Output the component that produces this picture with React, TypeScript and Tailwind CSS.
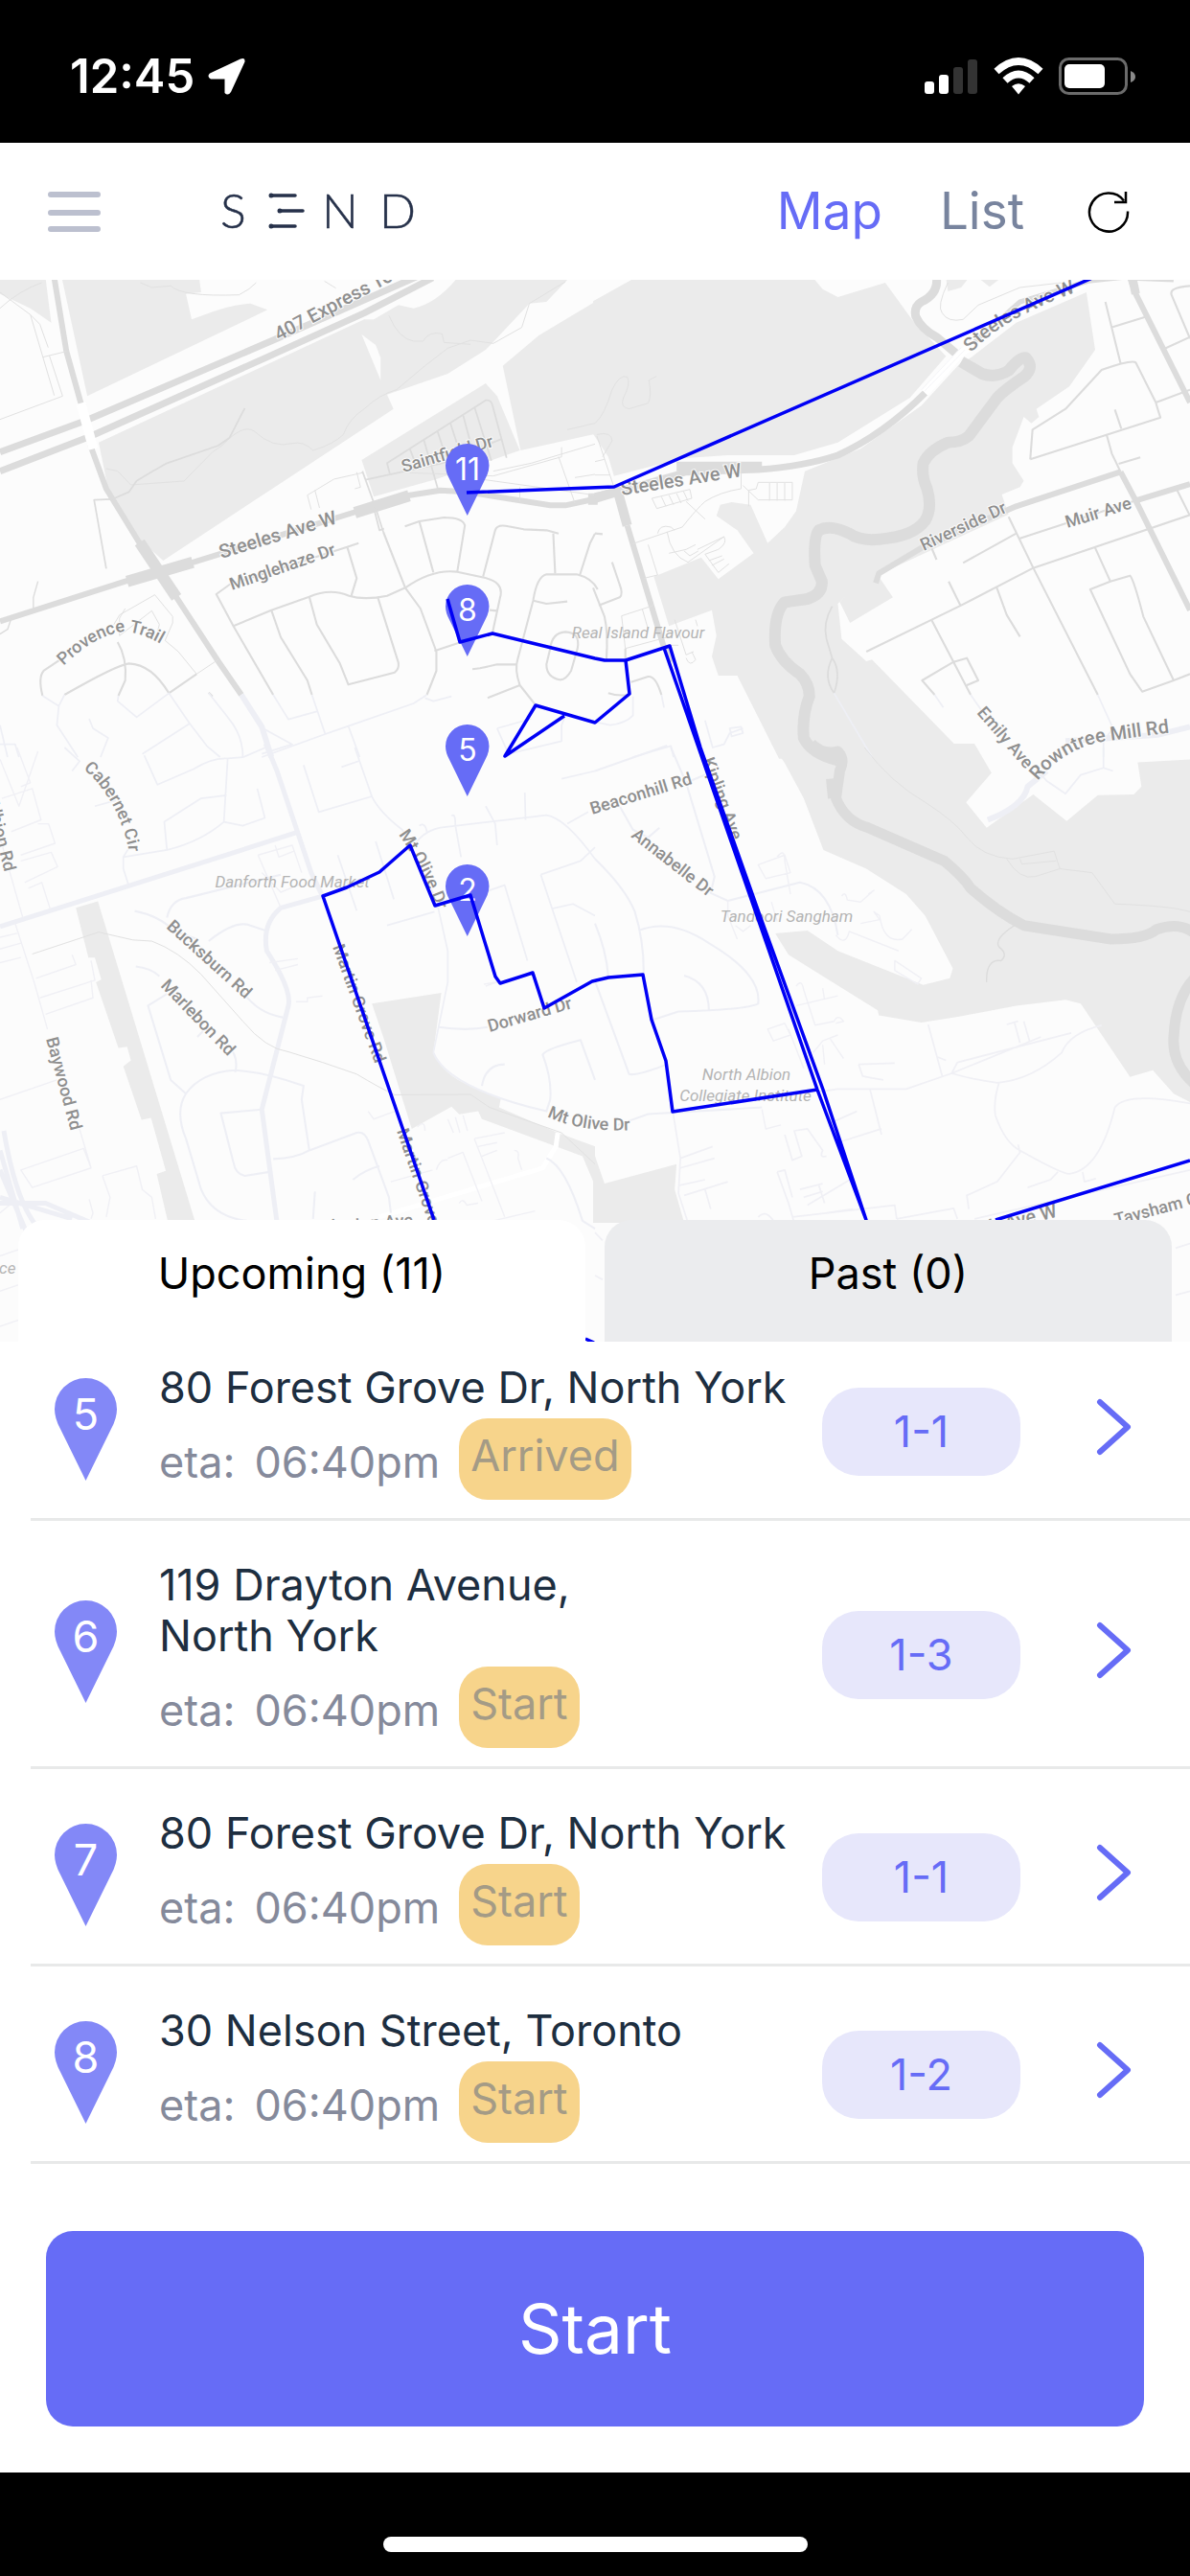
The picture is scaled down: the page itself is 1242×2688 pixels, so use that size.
import React from "react";

type Stop = { id: number; address: string[]; eta: string; status: string; parcels: string };

const stops: Stop[] = [
  { id: 5, address: ["80 Forest Grove Dr, North York"], eta: "06:40pm", status: "Arrived", parcels: "1-1" },
  { id: 6, address: ["119 Drayton Avenue,", "North York"], eta: "06:40pm", status: "Start", parcels: "1-3" },
  { id: 7, address: ["80 Forest Grove Dr, North York"], eta: "06:40pm", status: "Start", parcels: "1-1" },
  { id: 8, address: ["30 Nelson Street, Toronto"], eta: "06:40pm", status: "Start", parcels: "1-2" },
];

/* Map geometry, one record per quadrant tile. */
type Tile = { place: string; parks: string[]; holes?: string[]; water?: [string, number][]; roads: [string, number, number?][] };

const ROAD = ["#dcdcdc", "#eeeff5", "#e1e1e1", "#ffffff", "#f0f0f5"];

const northWest: Tile = {
  place: "translate(0 290) scale(0.39605 0.33333)",
  parks: [
    "M0 0H120L135 140L80 95L0 50Z",
    "M163 0H525L530 45L490 50L505 130L540 115Q600 85 660 80L705 100L230 370Z",
    "M260 515L960 130L985 130L1050 85L1090 95Q1150 80 1205 0H1500L1440 75L1395 80L1300 200L1280 225L1180 300L1070 345L1020 365L1037 410L430 885L365 815L290 690Z",
    "M1325 275L1420 180L1575 70V487L1372 540Z",
    "M953 570L1280 330L1310 370L1370 540L1150 630L985 685Z",
  ],
  holes: ["M953 177L990 210L1003 250L1003 320Z"],
  roads: [
    ["M0 545L230 445L730 190L1110 -10", 7],
    ["M0 605L240 495L700 250L960 110L1140 0", 7],
    ["M143 0L175 230L215 400L240 530L280 660L365 825L465 1000L575 1200L636 1305", 6],
    ["M213 392L246 535", 10, 3],
    ["M0 1075L330 950L510 890L930 735L1080 680L1160 665L1230 670L1450 712L1490 712L1575 690", 6],
    ["M335 950L508 890M935 735L1078 682M1550 692H1575", 12],
    ["M368 828L465 1000", 12],
    ["M0 45L80 115L105 145L127 218M80 115L143 368M130 243L165 370L0 443M113 248L175 230", 2, 2],
    ["M0 95Q50 40 110 15M370 15L400 30L450 25Q480 60 630 53Q660 35 675 15M855 10L885 32", 2, 2],
    ["M280 597L310 605L345 648L460 638L485 636L560 545L585 525Q640 455 670 480Q720 535 770 518Q800 510 825 540Q880 520 905 490Q920 440 960 410Q1000 365 1045 350L1120 275L1180 220L1240 195L1300 205L1375 155L1395 80L1490 12", 2, 2],
    ["M645 408L605 500L575 525L440 580L400 607L360 635L340 670L295 693L248 695L280 910", 2.5],
    ["M1025 118Q1050 190 1090 198L1115 198Q1130 165 1165 175L1170 202L1240 208", 2, 2],
    ["M820 725L810 680L880 630L955 610M830 665L842 720M940 608L950 655L935 660", 2, 2],
    ["M955 605L990 720L1010 795M985 720L1000 790L1012 785", 2.5],
    ["M963 632L1165 580L1320 505M1027 612L1020 580L1280 383Q1295 380 1298 400L1335 563M1080 535L1098 590M1117 507L1155 665M1153 480L1175 560M1187 455L1210 540M1220 428L1250 560M1250 403L1295 572", 2.5],
    ["M1080 610L1300 620L1480 560L1480 530M1300 605L1400 580L1568 520M1472 560L1515 705M1370 655V700M1495 475L1568 455M1515 625L1568 615M1255 628L1568 680", 2, 2],
    ["M1010 795L1068 970L1108 1035L1150 1170V1230L1125 1305", 3],
    ["M1067 778L1105 762L1170 750Q1220 750 1225 775L1205 920M1105 762L1142 922M1273 935L1305 790Q1310 770 1340 778L1380 787L1440 790L1472 800M1458 800L1463 925M1568 800L1555 830L1528 930", 3],
    ["M615 1090L715 1040L815 998Q870 970 920 995Q960 1010 1020 995L1068 970Q1140 910 1205 920L1270 937Q1330 950 1318 1000L1298 1110", 3],
    ["M945 830L915 842L940 940L925 998M915 842L605 960L570 990L615 1090L720 1305", 3],
    ["M715 1040L740 1125L810 1260L822 1305M815 998L835 1085L895 1205L918 1273L1040 1235Q1052 1225 1050 1205L995 998", 3],
    ["M1145 1168L1215 1140M1245 1225L1265 1222L1310 1210H1360M1290 1040L1310 1042M1285 1315L1370 1275", 3],
    ["M1410 1335L1370 1275Q1355 1225 1365 1190L1405 1010Q1415 935 1440 928H1520Q1560 940 1575 975M1405 1010L1440 1020L1495 1013M1450 1160Q1455 1110 1490 1108Q1530 1110 1522 1160L1505 1230Q1490 1260 1475 1258Q1440 1250 1440 1210Z", 3],
    ["M300 1085L315 1055L408 992L455 1060V1080L435 1135L470 1170L518 1240L575 1195M330 1035L315 1065M315 1065V1120L400 1042L420 1085L410 1130", 2.5, 2],
    ["M445 1300L518 1240M445 1300Q400 1210 340 1207Q310 1210 170 1305M310 1140Q335 1190 330 1260L312 1308M165 1190L115 1230Q100 1250 112 1308M550 1298L560 1310", 3],
    ["M0 1115L20 1100L30 1065M88 1040V1000L100 950", 2],
    ["M636 1305L690 1405L715 1500", 6, 1],
    ["M112 1308L155 1340L150 1400L205 1500M170 1305L155 1340M312 1308L310 1325L360 1375L445 1300L500 1395L545 1465L580 1500M500 1395L375 1490M550 1300L600 1375Q640 1430 640 1500M235 1380L245 1410L285 1440L265 1500M720 1305L760 1382L835 1357M822 1305L857 1428L690 1500M857 1428L918 1403L1090 1332L1125 1305M918 1403L948 1500M1310 1410L1400 1380M1310 1410L1340 1490L1480 1450V1400L1490 1370M0 1400L20 1500M0 1460H40L50 1500M1120 1315L1142 1325L1190 1310M685 1405L770 1460L690 1490", 2.5, 1],
  ],
};

const northEast: Tile = {
  place: "translate(621 290) scale(0.39605 0.33333)",
  parks: [
    "M-5 73L105 0H575L600 35L640 60L765 15L835 130L925 245L830 375L640 515L525 555L350 555L230 565L50 620L35 560L-5 488Z",
    "M925 0H985L965 30L930 42Z M1010 0L1040 28L1070 0Z",
    "M990 250L1110 140L1295 45L1318 225L1250 340L1163 410L1170 435L1150 455L1130 435L1100 530V580L1130 635L1120 655L1072 678L1090 740L745 930L785 1000L672 1080L645 1015L665 990L640 1020L650 1130L715 1200L730 1195L985 1505H485L375 1245L325 1245L308 1185L320 1120L308 1040L195 1090L155 935L280 875L325 943L418 862L375 790L320 745L330 710L360 702L410 710L455 830L500 780L530 730L553 605L700 535L860 400L960 270Z",
  ],
  water: [
    ["M900 0Q905 50 860 75Q840 90 845 120Q860 160 900 185L950 235", 9],
    ["M965 262L1020 300Q1055 315 1090 290Q1120 245 1135 250Q1160 280 1130 310Q1080 350 1060 375L985 495Q965 515 930 515Q880 540 865 580Q860 620 875 660Q890 720 870 760Q840 810 750 818Q700 825 670 800Q620 770 590 790Q575 810 580 900L598 950Q600 990 560 1005L500 1015Q470 1050 475 1150Q490 1200 540 1240Q565 1270 565 1310Q545 1370 550 1440Q570 1490 640 1510", 12],
  ],
  roads: [
    ["M0 683L60 668L240 608L430 600Q550 590 640 555Q760 490 870 360", 7],
    ["M215 590H440", 10],
    ["M870 360L960 240L1110 110L1290 20", 8, 3],
    ["M868 355L975 225M860 350L965 218", 1, 4],
    ["M1000 200L1120 75L1300 10L1440 -8", 5],
    ["M0 690L60 668L85 775", 10],
    ["M85 775L180 1150L205 1200", 6],
    ["M0 455Q25 430 45 350Q65 300 85 310Q95 330 75 375Q65 405 90 410L140 392Q150 370 142 320L162 308M5 495L50 655M5 490Q45 480 45 510L20 560M0 575L25 568M0 617H40", 2, 2],
    ["M930 15Q900 90 915 110Q930 140 970 130L1010 85L1120 30L1230 15", 2, 2],
    ["M100 832L230 780Q270 720 290 700Q330 670 385 660V600M390 650L430 695H520V640H430L425 660L405 665V715M460 642V697M480 642V697M500 642V697M150 690L250 662L255 690L163 722ZM175 685L187 715M195 680L207 710M215 675L227 705M233 668L245 698M240 700L290 755M190 795Q200 870 245 890L340 810M165 800Q170 770 200 780L210 790M195 862L240 850L265 835M235 855L250 870L272 855M270 850L340 810Q350 830 325 850L290 865L325 922L353 895M300 885L335 870M308 900L340 880", 2, 2],
    ["M130 940L165 930L140 835M70 1058L155 1025M70 1058L80 1160L205 1120M125 1038L140 1100M180 1150L220 1150M210 1070L240 1180L260 1170M240 1190Q250 1220 265 1195L255 1170M265 1070L270 1090", 2, 2],
    ["M-5 970L25 1060Q35 1110 30 1195M10 1025L65 1000Q75 990 65 960L45 890M0 800L20 802M80 1160V1195M95 1265L140 1248Q160 1245 175 1305M35 1300Q60 1310 90 1305", 3],
    ["M1410 0L1425 50L1568 390", 6],
    ["M1525 0L1415 -5L1425 50", 9],
    ["M1568 25Q1510 30 1520 55L1568 190M1345 75L1385 268M1360 155L1450 122M1500 222L1568 185M1147 568L1490 437Q1480 400 1478 390L1568 350M1478 390L1425 265Q1415 255 1335 288L1240 410L1153 475L1147 568M1370 412L1387 472M1348 490L1362 550L1385 607M1380 582L1437 562", 3],
    ["M740 955L748 925L865 842L1110 715L1385 607", 6],
    ["M1385 607L1425 697L1568 1040M1425 697L1568 645", 6],
    ["M1425 697L1120 815M1530 655L1568 745M1568 742L1155 908L965 1025L715 1170M1090 748L1155 908L1325 1305M1110 800L970 892M880 825L900 882M932 950L963 1025M1058 967L1085 1055L1120 1123M888 1073L990 1305M895 1305L862 1260L945 1202L980 1190L1010 1260L980 1275M1318 845L1358 950L1410 932Q1420 945 1445 1060L1525 1260L1442 1295L1410 1240L1305 975L1358 950M1525 1260L1568 1240", 3],
    ["M625 1028Q600 1080 610 1130L625 1190Q650 1230 630 1300M625 1190Q600 1250 630 1300", 2.5],
    ["M630 1300L730 1500M990 1305L1040 1390M895 1305L918 1345M1325 1305L1365 1410M1340 1430V1500M1365 1410L1340 1450M100 1310V1370Q80 1395 40 1400L0 1390M100 1500L200 1465L207 1500M175 1305L182 1345M290 1385L310 1470L340 1460L355 1425L390 1410M355 1410L385 1405L390 1425L360 1435Z", 2.5, 1],
    ["M1240 1450L1485 1430L1568 1405", 6, 1],
  ],
};

const southWest: Tile = {
  place: "translate(0 780) scale(0.39605 0.40816)",
  parks: [
    "M200 410L258 393L515 1215H443L413 1090L437 1082L398 947L373 952L325 815L345 800L335 765L312 768L253 600L267 593L250 537H233Z",
    "M980 655L1163 627L1142 780Q1170 840 1240 865L1320 897L1315 920L1470 985L1568 1020V1120L1535 1045L1270 950L1260 930L1210 938L1190 918L1085 975L1010 740Z",
  ],
  roads: [
    ["M700 -10L730 60L820 320L850 380L740 410Q690 450 703 520Q770 620 760 660L690 925L730 1215", 5, 1],
    ["M0 458L780 218", 5, 1],
    ["M1470 985L1465 1020L1430 1075L1000 1200", 5, 3],
    ["M10 980Q40 1150 90 1215M0 1165H120L300 1240M0 1150L190 1205M0 1030L60 1230M0 1080L70 1240", 5, 1],
    ["M170 0L210 35L190 60M380 20L415 95L510 55Q560 25 600 28L590 190Q530 240 440 262L325 280V310L340 355M440 262L433 190L530 130L597 122M590 190L640 200L698 180L678 105M360 225L325 280M600 28L640 25L700 0M250 150L305 135", 2.5, 1],
    ["M800 45L840 165L980 125L935 0M900 50L945 35M980 125Q1000 165 1060 210L1150 390L1180 520L1180 600L1142 780M1085 260Q1110 215 1160 205L1440 173Q1490 180 1568 285M1105 200Q1120 190 1125 215M1190 175Q1200 165 1200 200L1215 280M1280 150L1305 195L1310 250M1383 115L1385 185M1480 80L1568 60M1495 195L1550 165M990 240L1038 388M890 275L940 417M1020 455L1145 420M1275 370L1330 352L1390 545M1425 325L1530 290L1568 255M1425 325L1520 600M1455 412L1510 400L1568 430", 2.5, 1],
    ["M0 30L50 150L100 10M45 0L80 90L55 100M5 130L85 105L108 185L30 215M100 195L128 195L145 245L55 275M55 290L135 268L152 305L65 345M0 230L60 435M75 360L110 345L133 415M0 485L45 475M0 515L55 500M0 550L55 537M40 450L90 600L125 720M240 1075L205 960M95 590L200 555L190 530M240 545L250 595L105 640M240 595L245 640L120 682M0 900L150 850M55 1080L220 1025L240 1075L85 1125ZM0 1190L25 1170M270 1095L360 1070L375 1130L400 1150L410 1205M270 1095L290 1150L280 1200M0 1300L60 1280M0 1390L60 1370M0 1480L60 1460M235 1155L245 1190L240 1205", 2, 4],
    ["M355 418Q420 430 460 470L520 490M440 435Q450 390 490 385L740 325M550 495Q620 440 660 455L705 470M640 625Q680 680 745 690M358 560Q400 565 420 585M440 630L390 660L450 850L490 885M600 760Q630 790 620 830M520 740L535 725M490 885Q530 830 620 825Q700 830 800 865L795 900L815 1030M490 885Q460 930 490 1000L530 1130Q560 1200 650 1210M695 925L582 935L615 1060Q620 1090 645 1095L710 1085M720 1052Q780 1050 815 1030L940 985Q960 980 970 1005L1025 1150L1030 1190M930 1105Q960 1080 1000 1070M825 1205L830 1135M1155 715Q1230 725 1285 715M1142 780Q1180 870 1440 930L1450 900Q1455 850 1430 785Q1440 770 1530 748L1568 850M1270 865Q1280 810 1330 810M1440 1050Q1490 1070 1535 1210L1568 1230", 3, 1],
    ["M680 275L770 250L795 320M680 275L740 410M725 250L735 280L775 265M690 320L740 370L790 350M710 550L785 540M725 570L785 555M780 650H810V640L850 635M1275 605L1370 590M1280 610L1310 600M970 930L985 950L1040 930M1100 970Q1120 950 1120 980M1030 1110L1140 1080M1180 950L1195 985M1200 945L1212 985M1220 940L1232 980M1180 1050L1220 1035L1270 1160M1250 1000L1330 985M1250 1000L1330 1200M1260 1020L1310 1010M1270 1045L1310 1030M1150 1080Q1160 1050 1180 1055M1210 1165Q1220 1150 1230 1170L1260 1165M1300 1210L1410 1185M1355 1030Q1370 1030 1365 1050L1375 1080", 2, 4],
    ["M85 528L260 472L350 492L400 495Q470 520 530 580L640 700Q700 770 760 778L850 805L940 835Q1000 870 1040 888L1240 887L1290 920L1480 985L1568 1065", 1.5, 2],
  ],
};

const southEast: Tile = {
  place: "translate(621 780) scale(0.39605 0.40816)",
  parks: [
    "M465 -10H1000L1045 65L978 140L1032 205L1155 120L1243 188L1325 122L1420 120L1440 100L1430 38L1575 30V910L1525 885L1470 825L1410 842L1280 655L1240 645L1110 660L960 688L860 703L748 685L745 672L510 530L475 475L560 468L640 520L865 607L935 590L943 565L870 430L820 375L715 310L602 262L550 130L500 40Z",
    "M-5 1030L25 1115L215 1065L210 1130L235 1215H-5Z",
  ],
  water: [
    ["M570 -10Q600 20 640 10Q660 30 645 60L635 130Q660 190 720 205L920 290Q970 330 990 360Q1060 420 1130 455L1360 490Q1450 490 1480 465Q1540 445 1580 475M1580 590Q1530 640 1525 740Q1520 810 1580 860", 11],
    ["M620 80L625 130", 9],
  ],
  roads: [
    ["M710 0Q780 90 870 140Q950 190 980 230Q1020 280 1100 285L1210 265L1225 310L1310 320L1370 400Q1520 405 1568 420M1085 285Q1120 340 1160 330L1225 310M1120 285L1125 298L1215 290", 2, 2],
    ["M1105 455Q1050 490 1065 510Q1090 530 1070 545Q1030 540 1032 600", 2],
    ["M1035 185Q1130 150 1140 100L1190 60", 6, 1],
    ["M1155 45L1190 85L1240 118L1280 70L1340 52L1365 60M1340 0V52", 2.5, 1],
    ["M0 60L190 -5M200 0L240 90L315 330L305 372L350 392L540 345Q620 360 640 480M65 150L100 210L140 230M240 90L290 70M140 230L170 205M0 285Q80 360 105 420Q130 500 128 580M0 450Q30 520 35 585M115 468Q200 435 300 500Q440 580 430 655Q400 670 220 675L150 697M235 583Q300 600 300 672M0 597L90 835Q110 840 190 810M60 965L140 937L440 920", 3, 1],
    ["M440 925L450 975L490 965M430 300L500 275L515 320L450 335ZM480 280Q500 255 500 290L515 375M350 390V430L375 490M370 455L390 470L410 455M465 395L480 445M635 480Q660 510 670 470L800 520M650 380Q660 365 665 390L700 395L735 365L720 375M700 450L750 440L735 420L750 430Q760 500 810 490L835 465M790 545L860 590L850 605L790 570ZM530 610Q545 590 550 620L580 710L630 700Q640 680 655 700L635 705M530 660L640 635M600 615L605 645M455 720L500 705L515 735L470 750ZM510 720L550 820M575 780L600 750L640 735M620 745L655 795M600 760L605 810", 2, 4],
    ["M590 880L640 873H820L940 833L1175 740M940 833L955 805L1255 730M1085 708L1115 700M1105 702L1120 755M1130 700L1145 750M878 708L915 840M900 790L925 800M695 810L790 807M695 810L705 840L730 845L760 850M725 875L755 990M640 1010L755 975M620 960L690 930M940 833Q1000 850 1060 857Q1150 850 1230 780Q1250 730 1335 710M1065 857Q1050 900 1055 940Q1080 1010 1120 1030Q1230 1090 1250 1090Q1330 1080 1370 920Q1400 880 1568 910M1115 1015L1120 1035L1060 1110L980 1145L985 1180M1140 1125L1200 1105L1220 1085M1285 1085L1290 1110L1320 1102", 2.5, 4],
    ["M205 930L225 1050L220 1140L245 1215M225 1050L310 1020M225 1075L315 1050M220 1120L290 1105M235 1145L350 1110M290 1130L305 1180M500 990L520 1055L545 1045L525 980L560 975L600 1030Q590 1050 610 1045M480 1085L510 1165L525 1215M480 1085L500 1080L520 1150M540 1130L600 1115M550 1150L600 1135M560 1170L680 1100M590 1120L605 1165M430 1200Q450 1180 470 1210M520 1200L790 1170L795 1205M610 1190L680 1180M795 1205L945 1178L955 1205M1000 1205L1568 1080M1530 1280L1568 1268M1530 1400L1568 1390M0 1240L20 1260M0 1350L20 1360", 2.5, 4],
  ],
};

const tiles = [northWest, northEast, southWest, southEast];

type Label = { text: string; x: number; y: number; angle?: number; size?: number };

const streetLabels: Label[] = [
  { text: "407 Express Toll", x: 291, y: 356, angle: -28, size: 20 },
  { text: "Saintfield Dr", x: 421, y: 493, angle: -16 },
  { text: "Steeles Ave W", x: 231, y: 583, angle: -17, size: 20 },
  { text: "Minglehaze Dr", x: 242, y: 616, angle: -19 },
  { text: "Steeles Ave W", x: 649, y: 517, angle: -9, size: 20 },
  { text: "Riverside Dr", x: 964, y: 575, angle: -25 },
  { text: "Muir Ave", x: 1114, y: 551, angle: -17 },
  { text: "Emily Ave", x: 1019, y: 744, angle: 49 },
  { text: "Beaconhill Rd", x: 618, y: 850, angle: -17 },
  { text: "Annabelle Dr", x: 658, y: 873, angle: 38 },
  { text: "Kipling Ave", x: 733, y: 793, angle: 70 },
  { text: "Martin Grove Rd", x: 347, y: 988, angle: 70 },
  { text: "Martin Grove", x: 414, y: 1180, angle: 71 },
  { text: "Bucksburn Rd", x: 173, y: 968, angle: 42 },
  { text: "Marlebon Rd", x: 167, y: 1029, angle: 46 },
  { text: "Baywood Rd", x: 48, y: 1084, angle: 75 },
  { text: "Dorward Dr", x: 511, y: 1077, angle: -16 },
  { text: "Lexington Ave", x: 318, y: 1287, angle: -4 },
  { text: "Albion Rd", x: -14, y: 835, angle: 76 },
  { text: "Finch Ave W", x: 998, y: 1296, angle: -14, size: 20 },
  { text: "Taysham Cres", x: 1165, y: 1279, angle: -15 },
];

const placeLabels: Label[] = [
  { text: "Real Island Flavour", x: 666, y: 666 },
  { text: "Danforth Food Market", x: 305, y: 926 },
  { text: "Tandoori Sangham", x: 821, y: 962 },
  { text: "North Albion", x: 779, y: 1127 },
  { text: "Collegiate Institute", x: 778, y: 1149 },
  { text: "Place", x: -4, y: 1329 },
];

const mapPins = [
  { id: 11, top: 463 },
  { id: 8, top: 610 },
  { id: 5, top: 756 },
  { id: 2, top: 902 },
];

const PIN = "M32.5 107L6 53Q0 42 0 32.5A32.5 32.5 0 0 1 65 32.5Q65 42 59 53Z";

function RouteMap() {
  return (
    <svg className="block h-auto w-full bg-[#fcfcfc]" viewBox="0 292 1242 1108" role="img" aria-label="Delivery route map">
      <defs>
        <path id="provence" d="M66 695Q100 662 130 659Q154 661 180 680" />
        <path id="cabernet" d="M87 802Q122 832 134 885L135 900" />
        <path id="rowntree" d="M1083 815Q1110 782 1150 774Q1180 770 1240 762" />
        <path id="olive" d="M416 871Q442 906 462 965" />
        <path id="olive-east" d="M571 1165Q610 1184 675 1178" />
        <path id="steeles-north" d="M1014 368Q1050 327 1150 296" />
      </defs>
      {tiles.map((t) => (
        <g key={t.place} transform={t.place}>
          {t.parks.map((d) => <path key={d} d={d} fill="#ebebeb" />)}
          {t.holes?.map((d) => <path key={d} d={d} fill="#fcfcfc" />)}
        </g>
      ))}
      {tiles.map((t) => (
        <g key={t.place} transform={t.place} fill="none" strokeLinejoin="round">
          {t.water?.map(([d, w]) => <path key={d} d={d} stroke="#dcdcdc" strokeWidth={w} vectorEffect="non-scaling-stroke" />)}
          {t.roads.map(([d, w, tone]) => (
            <path key={d} d={d} stroke={ROAD[tone ?? 0]} strokeWidth={tone === 2 ? 1 : w < 5 ? w * 0.7 : w} vectorEffect="non-scaling-stroke" />
          ))}
        </g>
      ))}
      <g fontFamily="Roboto, sans-serif" fontWeight="500" fill="#8f8f8f" stroke="#fcfcfc" strokeWidth="2" paintOrder="stroke">
        {streetLabels.map((l) => (
          <text key={l.text + l.x} fontSize={l.size ?? 18} transform={`translate(${l.x} ${l.y}) rotate(${l.angle ?? 0})`}>{l.text}</text>
        ))}
        <text fontSize="18"><textPath href="#provence">Provence Trail</textPath></text>
        <text fontSize="18"><textPath href="#cabernet">Cabernet Cir</textPath></text>
        <text fontSize="20"><textPath href="#rowntree">Rowntree Mill Rd</textPath></text>
        <text fontSize="18"><textPath href="#olive">Mt Olive Dr</textPath></text>
        <text fontSize="18"><textPath href="#olive-east">Mt Olive Dr</textPath></text>
        <text fontSize="20"><textPath href="#steeles-north">Steeles Ave W</textPath></text>
      </g>
      <g fontFamily="Roboto, sans-serif" fontStyle="italic" fontSize="17" fill="#b4b4b4" textAnchor="middle">
        {placeLabels.map((l) => <text key={l.text} x={l.x} y={l.y}>{l.text}</text>)}
      </g>
      {mapPins.map((p) => (
        <g key={p.id} transform={`translate(465 ${p.top})`}>
          <path d={PIN} transform="scale(0.7)" fill="#666cf6" />
          <text x="23" y="38" textAnchor="middle" fontFamily="Inter, sans-serif" fontSize="32" fill="#ffffff">{p.id}</text>
        </g>
      ))}
      <g fill="none" stroke="#0000f5" strokeWidth="3.5" strokeLinejoin="round">
        <path d="M1140 290L641 508L487 514" />
        <path d="M467 625L480 670L514 661L621 687L631 689H653L699 674L731 780L793 955L859 1137L904 1273L853 1137L693 676" />
        <path d="M653 689L657 724L621 754L559 736L527 789L589 747" />
        <path d="M853 1137L702 1160L695 1107L680 1064L671 1017L635 1020L618 1024L568 1052L556 1015L522 1026L517 1019L491 934L454 945L428 882L396 910L362 926L337 935L453 1273" />
        <path d="M1039 1273L1242 1211M611 1397L620 1401" />
      </g>
    </svg>
  );
}

function StatusBar() {
  return (
    <div className="flex h-[149px] items-center justify-between bg-black pt-2.5 pr-[55px] pl-[73px] text-white">
      <div className="flex items-center gap-3.5">
        <span className="text-[49px] leading-none font-semibold">12:45</span>
        <svg width="40" height="40" viewBox="0 0 40 40" fill="currentColor" aria-label="Location in use">
          <path d="M34 1.500Q39 -0.500 38.500 4.500L24 36Q21 40.500 17.500 37V22.500H3Q-1.500 20 2 16.500Z" />
        </svg>
      </div>
      <div className="flex items-center gap-4">
        <svg width="56" height="38" viewBox="0 0 56 38" fill="currentColor" aria-label="Signal">
          <rect x="0" y="24" width="10" height="13" rx="3" />
          <rect x="15" y="17" width="10" height="20" rx="3" />
          <rect x="30" y="9" width="10" height="28" rx="3" fill="#333333" />
          <rect x="45" y="1" width="10" height="36" rx="3" fill="#333333" />
        </svg>
        <svg width="52" height="40" viewBox="0 0 52 40" aria-label="Wi-Fi">
          <g fill="none" stroke="currentColor" strokeWidth="7.500">
            <path d="M3 14.500Q26 -6.500 49 14.500" />
            <path d="M12 24Q26 11 40 24" />
          </g>
          <path d="M19 30Q26 24.500 33 30L26 38.500Z" fill="currentColor" />
        </svg>
        <svg width="82" height="40" viewBox="0 0 82 40" aria-label="Battery">
          <rect x="1.500" y="1.500" width="69" height="36" rx="9" fill="none" stroke="#6b6b6b" strokeWidth="3" />
          <rect x="6" y="7" width="42" height="25" rx="5" fill="currentColor" />
          <path d="M75 14Q80 16 80 20T75 26Z" fill="#8a8a8a" />
        </svg>
      </div>
    </div>
  );
}

function Header() {
  return (
    <header className="flex h-[143px] items-center bg-white pr-[63px] pl-[50px]">
      <button type="button" aria-label="Open menu">
        <svg width="56" height="44" viewBox="0 0 56 44" stroke="#bcc0cf" strokeWidth="6" strokeLinecap="round">
          <path d="M3 4H52M3 23H52M3 40H52" />
        </svg>
      </button>
      <svg className="ml-[124px] text-[#26314a]" width="210" height="40" viewBox="0 0 210 40" role="img" aria-label="SEND">
        <g fontFamily="Lato, sans-serif" fontSize="50" fontWeight="300" fill="currentColor" stroke="currentColor" strokeWidth="0.5">
          <text x="0" y="37">S</text>
          <text x="106" y="37">N</text>
          <text x="166" y="37">D</text>
        </g>
        <path d="M53 3H78M62 19H86M53 35H78" stroke="currentColor" strokeWidth="3.500" strokeLinecap="round" />
        <g fill="currentColor"><circle cx="53" cy="3" r="2.500" /><circle cx="62" cy="19" r="2.500" /><circle cx="53" cy="35" r="2.500" /></g>
      </svg>
      <nav className="ml-auto flex items-center gap-[60px] text-[53px] leading-none">
        <a href="#map" className="text-[#666cf6]" aria-current="page">Map</a>
        <a href="#list" className="text-[#78849e]">List</a>
      </nav>
      <button type="button" aria-label="Refresh" className="ml-[66px]">
        <svg width="44" height="44" viewBox="0 0 44 44" fill="none" stroke="#000000" strokeWidth="2.500">
          <path d="M42 21.500A20 20 0 1 1 38 10.500" />
          <path d="M40 1V12H28" />
        </svg>
      </button>
    </header>
  );
}

function StopRow({ stop, first }: { stop: Stop; first: boolean }) {
  return (
    <li className={`ml-8 flex items-center border-b-[3px] border-[#e8e9e9] pr-[60px] pb-[19px] pl-[25px] ${first ? "pt-[21px]" : "pt-10"}`}>
      <svg className="mb-1 shrink-0" width="65" height="107" viewBox="0 0 65 107">
        <path d={PIN} fill="#8388f7" />
        <text x="32.500" y="54" textAnchor="middle" fontFamily="Inter, sans-serif" fontSize="45" fill="#ffffff">{stop.id}</text>
      </svg>
      <div className="ml-11 min-w-0 flex-1 text-[45px] leading-[53px]">
        <h2 className="text-[#1d2e40]">
          {stop.address.map((line) => <span key={line} className="block whitespace-nowrap">{line}</span>)}
        </h2>
        <div className="mt-1.5 flex items-center text-[#858a9b]">
          <span className="pt-1.5">eta:</span>
          <span className="ml-5 pt-1.5">{stop.eta}</span>
          <button type="button" className="ml-5 h-[85px] rounded-[30px] bg-[#f7d48b] px-3 pb-2 text-[#a49b86]">{stop.status}</button>
        </div>
      </div>
      <span className="mt-0.5 flex h-[92px] w-[207px] shrink-0 items-center justify-center rounded-[38px] bg-[#e7e7fb] text-[45px] text-[#666cf6]">{stop.parcels}</span>
      <button type="button" aria-label={`Open stop ${stop.id}`} className="mb-2 ml-[79px] shrink-0">
        <svg width="38" height="60" viewBox="0 0 38 60" fill="none" stroke="#666cf6" strokeWidth="6" strokeLinecap="round" strokeLinejoin="round">
          <path d="M4 4L33 30L4 56" />
        </svg>
      </button>
    </li>
  );
}

export default function App() {
  return (
    <div className="flex min-h-screen flex-col bg-white font-['Inter',sans-serif]">
      <StatusBar />
      <Header />
      <main className="flex flex-1 flex-col">
        <section className="relative">
          <RouteMap />
          <div role="tablist" className="absolute inset-x-0 bottom-0 flex gap-5 px-[19px] text-[45px] leading-[53px] text-black">
            <button type="button" role="tab" aria-selected="true" className="h-[127px] flex-1 rounded-t-[28px] bg-white pb-4">Upcoming (11)</button>
            <button type="button" role="tab" aria-selected="false" className="h-[127px] flex-1 rounded-t-[28px] bg-[#ebecee] pb-4">Past (0)</button>
          </div>
        </section>
        <ul>
          {stops.map((s, i) => <StopRow key={s.id} stop={s} first={i === 0} />)}
        </ul>
        <div className="flex px-12 pt-[70px] pb-12">
          <button type="button" className="h-[204px] flex-1 rounded-[28px] bg-[#666cf6] text-[71px] leading-none text-white">Start</button>
        </div>
      </main>
      <footer className="flex h-[109px] items-end justify-center bg-black pb-[26px]">
        <div className="h-4 w-[443px] rounded-full bg-white" />
      </footer>
    </div>
  );
}
